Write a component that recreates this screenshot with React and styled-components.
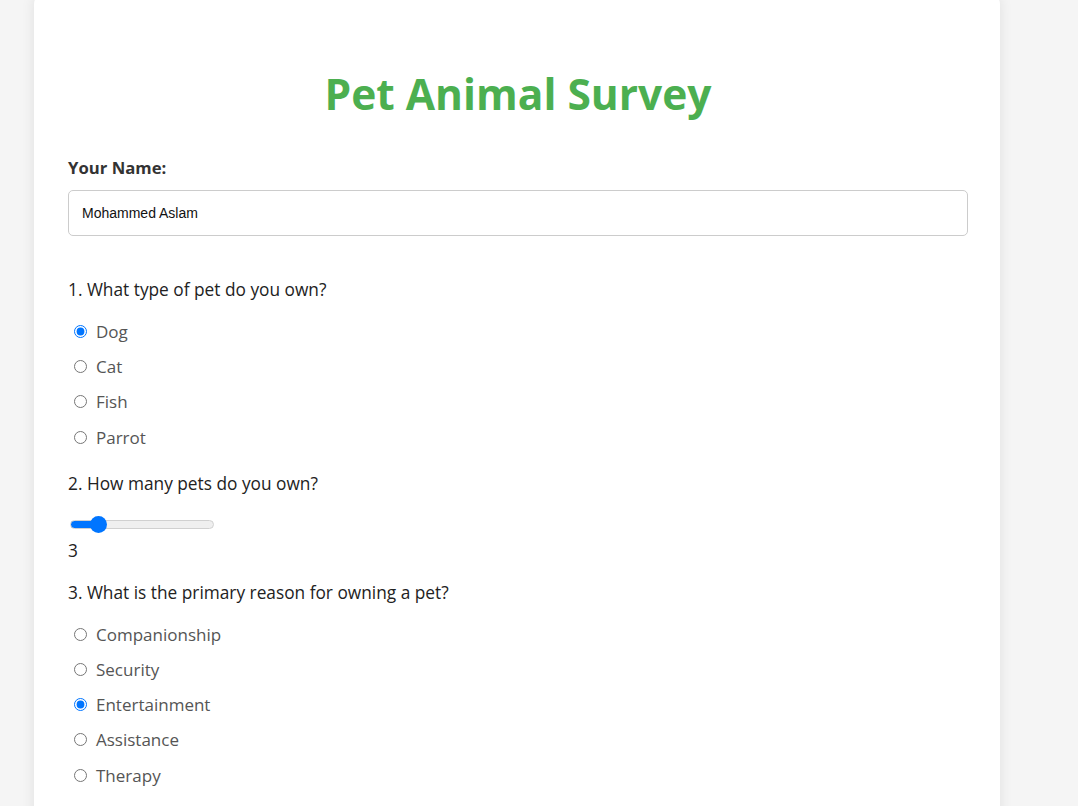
import React, { useState } from "react";
import styled, { createGlobalStyle } from "styled-components";

const Global = createGlobalStyle`
  html, body { margin: 0; padding: 0; }
  body {
    background: #f5f5f5;
    font-family: "Open Sans", "Noto Sans", sans-serif;
    color: #222;
  }
`;

const Page = styled.div`
  padding: 0 0 0 34px;
`;

const Card = styled.div`
  width: 900px;
  background: #fff;
  border-radius: 10px;
  box-shadow: 0 0 14px rgba(0, 0, 0, 0.09);
  padding: 40px 32px 80px 34px;
  margin-top: -6px;
`;

const Title = styled.h1`
  margin: 32px 0 35px;
  text-align: center;
  color: #4caf50;
  font-size: 42.5px;
  font-weight: 700;
  line-height: 56px;
`;

const FieldLabel = styled.label`
  display: block;
  font-weight: 700;
  font-size: 16.7px;
  color: #333;
  line-height: 22px;
  margin-bottom: 11px;
`;

const TextInput = styled.input`
  display: block;
  box-sizing: border-box;
  width: 100%;
  height: 46px;
  padding: 0 13px;
  border: 1px solid #ccc;
  border-radius: 5px;
  font-family: "Liberation Sans", Arial, sans-serif;
  font-size: 14px;
  color: #111;
  outline: none;
`;

const Question = styled.div`
  margin-top: ${(p) => p.$top}px;
`;

const QText = styled.p`
  margin: 0 0 13px;
  font-size: 17.3px;
  line-height: 22px;
  color: #222;
`;

const Options = styled.div`
  display: flex;
  flex-direction: column;
`;

const Option = styled.label`
  display: flex;
  align-items: center;
  height: 35.2px;
  font-size: 17px;
  color: #555;
`;

const Radio = styled.input`
  margin: 0 9px 0 6px;
  width: 13px;
  height: 13px;
`;

const Range = styled.input`
  -webkit-appearance: none;
  appearance: none;
  display: block;
  box-sizing: border-box;
  width: 144px;
  height: 9px;
  margin: 25px 0 11px 2px;
  border: 1px solid #d0d0d0;
  border-radius: 5px;
  outline: none;

  &::-webkit-slider-thumb {
    -webkit-appearance: none;
    appearance: none;
    width: 17px;
    height: 17px;
    border-radius: 50%;
    background: #0075ff;
    border: none;
  }
`;

const Value = styled.div`
  font-size: 17.3px;
  line-height: 22px;
  color: #222;
`;

const RadioGroup = ({ name, options, value }) => (
  <Options>
    {options.map((o) => (
      <Option key={o}>
        <Radio type="radio" name={name} defaultChecked={o === value} />
        {o}
      </Option>
    ))}
  </Options>
);

export default function App() {
  const [count, setCount] = useState(3);
  const min = 1;
  const max = 14;
  const pct = ((count - min) / (max - min)) * 100;
  return (
    <>
      <Global />
      <Page>
        <Card>
          <Title>Pet Animal Survey</Title>
          <FieldLabel htmlFor="name">Your Name:</FieldLabel>
          <TextInput id="name" defaultValue="Mohammed Aslam" />
          <Question $top={43}>
            <QText>1. What type of pet do you own?</QText>
            <RadioGroup name="pet" options={["Dog", "Cat", "Fish", "Parrot"]} value="Dog" />
          </Question>
          <Question $top={18}>
            <QText>2. How many pets do you own?</QText>
            <Range
              type="range"
              min={min}
              max={max}
              value={count}
              onChange={(e) => setCount(Number(e.target.value))}
              style={{
                background: `linear-gradient(to right, #0075ff 0%, #0075ff ${pct}%, #efefef ${pct}%, #efefef 100%)`,
              }}
            />
            <Value>{count}</Value>
          </Question>
          <Question $top={20}>
            <QText>3. What is the primary reason for owning a pet?</QText>
            <RadioGroup
              name="reason"
              options={["Companionship", "Security", "Entertainment", "Assistance", "Therapy"]}
              value="Entertainment"
            />
          </Question>
        </Card>
      </Page>
    </>
  );
}
